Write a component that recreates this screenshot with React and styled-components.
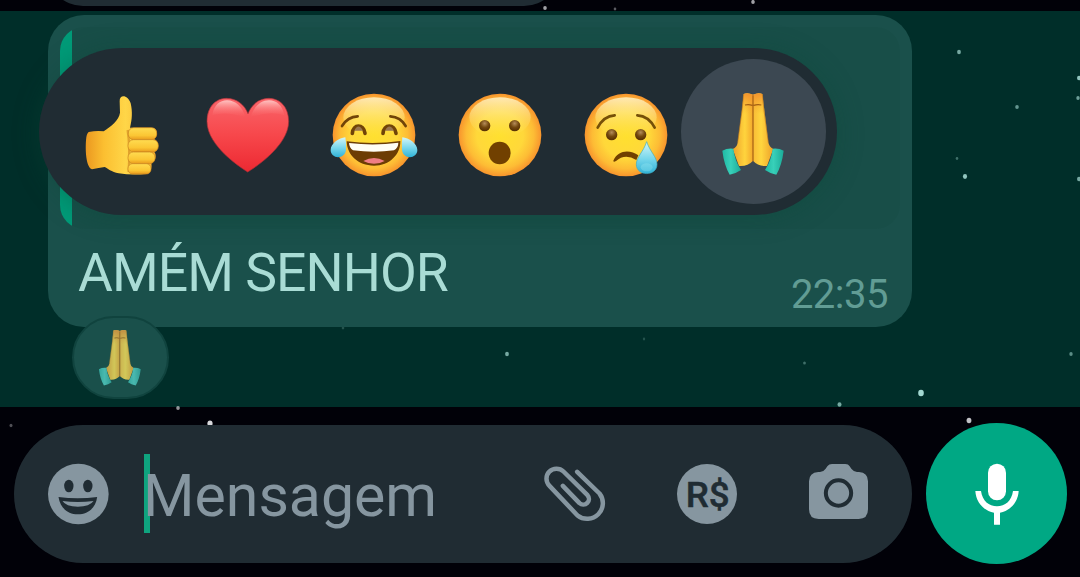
import React from "react";
import styled, { createGlobalStyle } from "styled-components";

const Global = createGlobalStyle`
  * { box-sizing: border-box; }
  body { margin: 0; background: #000; font-family: Roboto, "Liberation Sans", sans-serif; }
`;

const Screen = styled.main`
  position: relative;
  width: 1080px;
  height: 577px;
  overflow: hidden;
  display: flex;
  flex-direction: column;
  background: #010108;
`;

const Sky = styled.svg`
  position: absolute;
  inset: 0;
  z-index: 1;
  pointer-events: none;
`;

const PreviousRow = styled.div`
  height: 11px;
  padding-left: 47px;
  flex: none;
`;

const PreviousBubble = styled.div`
  width: 513px;
  height: 6px;
  overflow: hidden;
  display: flex;
  align-items: flex-end;
  &::before {
    content: "";
    width: 100%;
    height: 80px;
    flex: none;
    border-radius: 36px;
    background: #202c33;
  }
`;

const SelectedRow = styled.section`
  position: relative;
  height: 396px;
  flex: none;
  padding: 4px 168px 0 48px;
  background: #002e29;
`;

const Bubble = styled.article`
  position: relative;
  z-index: 2;
  height: 312px;
  padding: 12px;
  border-radius: 36px;
  background: #1a504b;
`;

const Quote = styled.div`
  height: 202px;
  border-radius: 24px;
  background: linear-gradient(90deg, #009b78 12px, #184e48 12px);
`;

const MessageLine = styled.div`
  display: flex;
  justify-content: space-between;
  align-items: flex-start;
  padding: 12px 12px 0 18px;
`;

const MessageText = styled.p`
  margin: 0;
  font-size: 53.5px;
  line-height: 64px;
  white-space: nowrap;
  letter-spacing: ${(p) => p.$tracking};
  color: #a9dcd5;
`;

const Time = styled.time`
  margin-top: 30px;
  font-size: 40px;
  line-height: 48px;
  letter-spacing: ${(p) => p.$tracking};
  color: #619c94;
`;

const ReactionTray = styled.div`
  position: absolute;
  z-index: 3;
  left: 39px;
  top: 36.5px;
  width: 798px;
  height: 167.5px;
  padding-left: 31px;
  border-radius: 84px;
  display: flex;
  align-items: center;
  gap: 15px;
  background: #202c33;
  box-shadow: 0 2px 26px rgba(10, 72, 54, 0.4);
`;

const EmojiSvg = styled.svg`
  width: ${(p) => p.$size}px;
  height: ${(p) => p.$size}px;
  flex: none;
  display: block;
`;

const TrayItem = styled.div`
  margin-top: 7px;
  flex: none;
`;

const ActiveItem = styled.div`
  width: 145px;
  height: 145px;
  margin-left: -14px;
  padding-top: 8px;
  flex: none;
  display: flex;
  align-items: center;
  justify-content: center;
  border-radius: 50%;
  background: #3c4852;
`;

const ReactionChip = styled.div`
  position: absolute;
  z-index: 2;
  left: 72px;
  top: 304.5px;
  width: 97px;
  height: 83px;
  padding-top: 3px;
  border-radius: 42px;
  border: 2px solid #10433e;
  background: #1a504b;
  display: flex;
  align-items: center;
  justify-content: center;
  & > svg {
    opacity: 0.84;
    filter: hue-rotate(4deg) saturate(0.8) brightness(1.03);
  }
`;

const Composer = styled.footer`
  position: relative;
  z-index: 2;
  flex: 1;
  display: flex;
  align-items: center;
  gap: 14px;
  padding: 4px 13px 0 14px;
`;

const InputPill = styled.div`
  width: 898px;
  height: 138px;
  padding: 0 42px 0 33px;
  border-radius: 69px;
  display: flex;
  align-items: center;
  background: #202c33;
`;

const Icon = styled.svg`
  width: ${(p) => p.$w}px;
  height: ${(p) => p.$h}px;
  flex: none;
  display: block;
`;

const Field = styled.div`
  flex: 1;
  display: flex;
  align-items: center;
  height: 80px;
  margin-left: 35px;
  padding-bottom: 2px;
`;

const Caret = styled.span`
  width: 6px;
  height: 79px;
  background: #0fa47f;
`;

const Placeholder = styled.span`
  margin-left: -7px;
  padding-top: 5px;
  font-size: 59px;
  line-height: 70px;
  color: #8696a0;
`;

const Actions = styled.div`
  display: flex;
  align-items: center;
  gap: 70px;
`;

const MicButton = styled.button`
  width: 141px;
  height: 141px;
  flex: none;
  margin-bottom: 2px;
  padding: 1px 0 0;
  border: 0;
  border-radius: 50%;
  display: flex;
  align-items: center;
  justify-content: center;
  background: #00a884;
`;

const stars = [
  [545, 8, 1.8, 0.7], [615, 9, 1.3, 0.4], [753, 2, 1.8, 0.7],
  [959, 52, 1.9, 0.65], [1017, 107, 1.8, 0.55], [957, 158.5, 1.3, 0.35],
  [965, 176.5, 2.1, 0.8], [1079, 78, 2, 0.8], [1078, 98, 1.7, 0.6], [1079, 179, 2, 0.65],
  [507, 354, 1.9, 0.65], [644, 339, 1.2, 0.2], [804.5, 363, 1.4, 0.35],
  [839.5, 404.5, 2, 0.65], [921, 393, 2.8, 0.9], [1071, 354, 1.7, 0.5],
  [178, 408, 1.8, 0.65], [11, 425.5, 1.5, 0.35], [210, 423.5, 2.6, 0.95],
  [969, 420.5, 2.4, 0.85], [343, 328, 1.3, 0.2],
];

const Defs = () => (
  <svg width="0" height="0" style={{ position: "absolute" }} aria-hidden="true">
    <defs>
      <radialGradient id="face" cx=".5" cy=".5" r=".51">
        <stop offset="0" stopColor="#ffe02f" />
        <stop offset=".55" stopColor="#ffd83a" />
        <stop offset=".8" stopColor="#fdbc35" />
        <stop offset="1" stopColor="#f7902c" />
      </radialGradient>
      <linearGradient id="shine" x2="0" y2="1">
        <stop offset="0" stopColor="#fff3ca" stopOpacity=".85" />
        <stop offset="1" stopColor="#ffe65c" stopOpacity="0" />
      </linearGradient>
      <linearGradient id="heart" x2="0" y2="1">
        <stop offset="0" stopColor="#f9656a" />
        <stop offset=".5" stopColor="#f7474b" />
        <stop offset="1" stopColor="#ec2932" />
      </linearGradient>
      <linearGradient id="gloss" x2="0" y2="1">
        <stop offset="0" stopColor="#ffd3d0" stopOpacity=".85" />
        <stop offset="1" stopColor="#ff6b6b" stopOpacity="0" />
      </linearGradient>
      <linearGradient id="hand" x2="1" y2="0">
        <stop offset="0" stopColor="#eb9820" />
        <stop offset=".25" stopColor="#fbbf31" />
        <stop offset=".55" stopColor="#ffd648" />
        <stop offset="1" stopColor="#f3a92a" />
      </linearGradient>
      <linearGradient id="finger" x2="0" y2="1">
        <stop offset="0" stopColor="#ffdc51" />
        <stop offset=".65" stopColor="#fbc634" />
        <stop offset="1" stopColor="#e99a1d" />
      </linearGradient>
      <linearGradient id="palmL" x2="1" y2="0">
        <stop offset="0" stopColor="#eda02a" />
        <stop offset=".6" stopColor="#ffd43d" />
        <stop offset="1" stopColor="#f3a82b" />
      </linearGradient>
      <linearGradient id="palmR" x2="1" y2="0">
        <stop offset="0" stopColor="#f9bb35" />
        <stop offset=".4" stopColor="#ffd63e" />
        <stop offset="1" stopColor="#eda02a" />
      </linearGradient>
      <linearGradient id="tips" x2="0" y2="1">
        <stop offset="0" stopColor="#f3932d" />
        <stop offset="1" stopColor="#f6a530" stopOpacity="0" />
      </linearGradient>
      <linearGradient id="cuff" x2="1" y2="0">
        <stop offset="0" stopColor="#1fb9a4" />
        <stop offset=".45" stopColor="#38d0b9" />
        <stop offset="1" stopColor="#1bab98" />
      </linearGradient>
      <linearGradient id="tear" x2="0" y2="1">
        <stop offset="0" stopColor="#d4f6f7" />
        <stop offset=".55" stopColor="#75d6eb" />
        <stop offset="1" stopColor="#30b2d6" />
      </linearGradient>
      <radialGradient id="eye" cx=".5" cy=".3" r=".6">
        <stop offset="0" stopColor="#b48c5a" />
        <stop offset=".6" stopColor="#74490f" />
        <stop offset="1" stopColor="#5c3405" />
      </radialGradient>
    </defs>
  </svg>
);

const Emoji = ({ size = 110, label, children }) => (
  <EmojiSvg $size={size} viewBox="0 0 330 330" role="img" aria-label={label}>{children}</EmojiSvg>
);

const Face = ({ cx }) => (
  <>
    <circle cx={cx} cy="165" r="124" fill="url(#face)" />
    <ellipse cx={cx} cy="112" rx="92" ry="60" fill="url(#shine)" />
  </>
);

const Thumb = () => (
  <Emoji label="thumbs up">
    <path fill="url(#hand)" d="M56 156Q80 151 101 154C122 140 147 121 150 98L149 64C148 43 173 43 182 70C188 96 186 119 180 143H248C265 145 264 171 252 177C269 183 268 210 253 216C261 224 257 246 244 250C247 264 241 280 230 282Q184 286 146 280C125 276 112 265 104 261Q86 264 66 268C51 264 45 223 48 181Q49 161 56 156Z" />
    <path d="M173 150Q181 203 176 276" fill="none" stroke="#c97c18" strokeWidth="7" opacity=".55" />
    <g fill="url(#finger)" stroke="#c88420" strokeWidth="2">
      <rect x="175" y="143" width="85" height="36" rx="16" />
      <rect x="174" y="179" width="91" height="37" rx="17" />
      <rect x="174" y="216" width="81" height="35" rx="16" />
      <rect x="174" y="251" width="69" height="31" rx="14" />
    </g>
  </Emoji>
);

const Heart = () => (
  <Emoji label="heart">
    <path fill="url(#heart)" stroke="#a92f36" strokeWidth="2" d="M158 276C146 268 36 201 36 124C36 80 63 55 94 55C126 55 149 75 159 101C169 75 191 55 222 55C255 55 281 82 281 124C281 200 171 268 158 276Z" />
    <path fill="url(#gloss)" d="M52 105C56 75 75 61 96 61C121 61 143 80 151 112Q96 93 52 105ZM167 112C175 80 198 61 222 61C244 61 263 76 268 106Q224 91 167 112Z" />
  </Emoji>
);

const Laugh = () => (
  <Emoji label="tears of joy">
    <Face cx="162" />
    <g fill="none" stroke="#714408" strokeLinecap="round">
      <path strokeWidth="8" d="M66 138Q83 110 113 109M211 109Q242 111 257 138" />
      <path strokeWidth="11" d="M97 160C99 131 131 131 135 160M189 160C191 131 224 131 228 160" />
    </g>
    <path fill="#9a7650" d="M103 152Q115 127 129 152ZM195 152Q208 127 222 152Z" />
    <path fill="#6c3d04" d="M80 184Q162 194 241 183C242 223 209 257 162 257C114 257 81 225 80 184Z" />
    <path fill="#fffef5" d="M87 189Q162 198 235 188Q235 204 222 211Q162 219 99 211Q88 204 87 189Z" />
    <path fill="#ef7e84" d="M130 243Q162 225 194 243Q181 251 162 251Q143 251 130 243Z" />
    <path fill="url(#tear)" d="M76 172C58 174 32 190 32 210C32 239 78 239 78 207Q79 187 76 172Z" />
    <path fill="url(#tear)" d="M247 172C266 174 292 190 292 210C292 239 246 239 246 207Q245 187 247 172Z" />
  </Emoji>
);

const Wow = () => (
  <Emoji label="surprised">
    <Face cx="165" />
    <circle cx="119" cy="137" r="17" fill="url(#eye)" />
    <circle cx="209" cy="137" r="17" fill="url(#eye)" />
    <ellipse cx="164" cy="219" rx="33" ry="34" fill="#714000" />
  </Emoji>
);

const Sad = () => (
  <Emoji label="crying">
    <Face cx="168" />
    <path fill="none" stroke="#765008" strokeWidth="8" strokeLinecap="round" d="M83 143Q101 108 134 106M202 106Q236 108 254 143" />
    <circle cx="125" cy="164" r="17" fill="url(#eye)" />
    <circle cx="212" cy="164" r="17" fill="url(#eye)" />
    <path fill="#714000" d="M130 242C144 208 182 209 205 226L199 240Q165 219 138 243Q130 248 130 242Z" />
    <path fill="url(#tear)" stroke="#3cacc5" strokeWidth="2" d="M230 185C239 214 261 231 261 253C261 290 199 290 199 253C199 232 221 214 230 185Z" />
    <ellipse cx="230" cy="262" rx="18" ry="12" fill="#a3eff5" opacity=".3" />
  </Emoji>
);

const Pray = ({ size }) => (
  <Emoji size={size} label="folded hands">
    <path fill="url(#palmL)" d="M134 42Q146 36 162 44V242Q146 260 120 258L101 207Q114 201 116 188L130 80Z" />
    <path fill="url(#palmR)" d="M162 44Q178 36 190 42L195 82L208 187Q210 201 223 207L204 258Q178 260 162 242Z" />
    <path fill="url(#tips)" d="M134 42Q146 36 162 44Q178 36 190 42L195 102H128Z" />
    <path fill="none" stroke="#a35e13" strokeWidth="3.5" d="M162 46V244M138 75Q149 72 160 76M164 76Q176 72 187 75" />
    <path fill="none" stroke="#bb741c" strokeWidth="3" opacity=".6" d="M134 42L129 92L116 188M190 42L195 92L208 188" />
    <path fill="url(#cuff)" d="M70 212Q84 204 103 206Q107 240 126 270Q112 280 92 284Q75 254 70 212Z" />
    <path fill="url(#cuff)" d="M254 212Q240 204 221 206Q217 240 198 270Q212 280 232 284Q249 254 254 212Z" />
  </Emoji>
);

const SmileIcon = () => (
  <Icon $w={62} $h={62} viewBox="141.500 189 186 186">
    <circle cx="235.500" cy="282" r="91" fill="#8696a0" />
    <ellipse cx="207" cy="258" rx="14" ry="19" fill="#202c33" />
    <ellipse cx="264" cy="258" rx="14" ry="19" fill="#202c33" />
    <path fill="#202c33" d="M176 291Q234 299 292 291C288 323 265 343 234 343S181 323 176 291Z" />
    <path fill="#8696a0" d="M188 303Q234 309 281 303Q270 320 234 320T188 303Z" />
  </Icon>
);

const ClipIcon = () => (
  <Icon $w={64} $h={62} viewBox="64.500 187.500 192 186">
    <path fill="none" stroke="#8696a0" strokeWidth="13.500" strokeLinecap="round" strokeLinejoin="round" d="M170 214L237 279A47 47 0 0 1 171 345L87 256A30 30 0 0 1 129 213L201 284A17 17 0 0 1 177 308L127 256" />
  </Icon>
);

const CurrencyIcon = () => (
  <Icon $w={62} $h={62} viewBox="468 189 186 186">
    <circle cx="561" cy="282" r="90" fill="#8696a0" />
    <text x="563" y="322" textAnchor="middle" textLength="132" lengthAdjust="spacingAndGlyphs" fontFamily="Roboto, sans-serif" fontSize="107" fontWeight="500" fill="#202c33" stroke="#202c33" strokeWidth="1.500" strokeLinejoin="round">R$</text>
  </Icon>
);

const CameraIcon = () => (
  <Icon $w={62} $h={62} viewBox="864 189 186 186">
    <path fill="#8696a0" d="M936 192H976Q985 192 989 199L994 206Q1001 215 1011 216H1017Q1044 218 1044 244V328Q1044 357 1016 357H896Q867 357 867 328V244Q867 218 895 216H900Q911 215 917 206L922 199Q927 192 936 192Z" />
    <circle cx="955.500" cy="279" r="38" fill="none" stroke="#202c33" strokeWidth="12" />
  </Icon>
);

const MicIcon = () => (
  <Icon $w={46} $h={64} viewBox="222 186 138 192">
    <rect x="264" y="191" width="54" height="110" rx="27" fill="#fff" />
    <path fill="#fff" d="M226 273H243C247 303 267 319 291 319S335 303 339 273H356C354 306 332 332 300 338V374H282V338C250 332 228 306 226 273Z" />
  </Icon>
);

export default function App() {
  return (
    <Screen>
      <Global />
      <Defs />
      <Sky width="1080" height="577">
        {stars.map(([x, y, r, o]) => (
          <ellipse key={`${x}-${y}`} cx={x} cy={y} rx={r} ry={r * 1.15} fill={y > 11 && y < 407 ? "#b5ebe3" : "#e4e4e8"} opacity={o} />
        ))}
      </Sky>
      <PreviousRow><PreviousBubble /></PreviousRow>
      <SelectedRow>
        <Bubble>
          <Quote />
          <MessageLine>
            <MessageText $tracking="-0.95px">AMÉM SENHOR</MessageText>
            <Time $tracking="-0.5px">22:35</Time>
          </MessageLine>
        </Bubble>
        <ReactionTray>
          <TrayItem><Thumb /></TrayItem>
          <TrayItem><Heart /></TrayItem>
          <TrayItem><Laugh /></TrayItem>
          <TrayItem><Wow /></TrayItem>
          <TrayItem><Sad /></TrayItem>
          <ActiveItem><Pray size={110} /></ActiveItem>
        </ReactionTray>
        <ReactionChip><Pray size={75} /></ReactionChip>
      </SelectedRow>
      <Composer>
        <InputPill>
          <SmileIcon />
          <Field>
            <Caret />
            <Placeholder>Mensagem</Placeholder>
          </Field>
          <Actions>
            <ClipIcon />
            <CurrencyIcon />
            <CameraIcon />
          </Actions>
        </InputPill>
        <MicButton aria-label="Gravar"><MicIcon /></MicButton>
      </Composer>
    </Screen>
  );
}
